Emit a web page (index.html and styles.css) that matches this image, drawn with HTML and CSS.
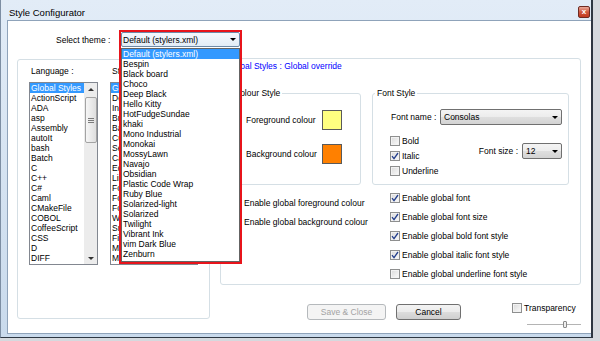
FILE: index.html
```html
<!DOCTYPE html>
<html lang="en">
<head>
    <meta charset="UTF-8">
    <meta name="viewport" content="width=device-width, initial-scale=1.0">
    <title>Style Configurator</title>
    <link rel="stylesheet" href="styles.css">
</head>
<body>
<div class="window">
    <div class="titlebar">
        <span class="title">Style Configurator</span>
        <span class="close-btn">x</span>
    </div>
    <div class="client">
        <!-- theme selector, shown dropped down -->
        <div class="theme-row">
            <span class="theme-label">Select theme :</span>
            <div class="theme-select">
                <div class="combo combo-open">
                    <span>Default (stylers.xml)</span>
                    <span class="arrow"></span>
                </div>
                <ul class="dropdown">
                    <li class="selected">Default (stylers.xml)</li>
                    <li>Bespin</li>
                    <li>Black board</li>
                    <li>Choco</li>
                    <li>Deep Black</li>
                    <li>Hello Kitty</li>
                    <li>HotFudgeSundae</li>
                    <li>khaki</li>
                    <li>Mono Industrial</li>
                    <li>Monokai</li>
                    <li>MossyLawn</li>
                    <li>Navajo</li>
                    <li>Obsidian</li>
                    <li>Plastic Code Wrap</li>
                    <li>Ruby Blue</li>
                    <li>Solarized-light</li>
                    <li>Solarized</li>
                    <li>Twilight</li>
                    <li>Vibrant Ink</li>
                    <li>vim Dark Blue</li>
                    <li>Zenburn</li>
                </ul>
                <div class="highlight"></div>
            </div>
        </div>

        <div class="main-row">
            <!-- language / style lists -->
            <div class="group lists-box">
                <div class="list-col">
                    <div class="list-label">Language :</div>
                    <div class="listbox lang-list">
                        <ul class="items">
                            <li class="selected">Global Styles</li>
                            <li>ActionScript</li>
                            <li>ADA</li>
                            <li>asp</li>
                            <li>Assembly</li>
                            <li>autoIt</li>
                            <li>bash</li>
                            <li>Batch</li>
                            <li>C</li>
                            <li>C++</li>
                            <li>C#</li>
                            <li>Caml</li>
                            <li>CMakeFile</li>
                            <li>COBOL</li>
                            <li>CoffeeScript</li>
                            <li>CSS</li>
                            <li>D</li>
                            <li>DIFF</li>
                        </ul>
                        <div class="scrollbar">
                            <span class="sb-btn"><span class="up"></span></span>
                            <span class="thumb"><span class="grip"></span></span>
                            <span class="sb-btn sb-end"><span class="down"></span></span>
                        </div>
                    </div>
                </div>
                <div class="list-col">
                    <div class="list-label">Style :</div>
                    <div class="listbox style-list">
                        <ul class="items">
                            <li class="selected">Global override</li>
                            <li>Default Style</li>
                            <li>Indent guideline style</li>
                            <li>Brace highlight style</li>
                            <li>Bad brace colour</li>
                            <li>Current line background colour</li>
                            <li>Selected text colour</li>
                            <li>Caret colour</li>
                            <li>Edge colour</li>
                            <li>Line number margin</li>
                            <li>Fold</li>
                            <li>Fold active</li>
                            <li>Fold margin</li>
                            <li>White space symbol</li>
                            <li>Smart HighLighting</li>
                            <li>Find Mark Style</li>
                            <li>Mark Style 1</li>
                            <li>Mark Style 2</li>
                        </ul>
                        <div class="scrollbar">
                            <span class="sb-btn"><span class="up"></span></span>
                            <span class="thumb"><span class="grip"></span></span>
                            <span class="sb-btn sb-end"><span class="down"></span></span>
                        </div>
                    </div>
                </div>
            </div>

            <div class="right-col">
                <div class="group style-box">
                    <div class="style-name">Global Styles : Global override</div>
                    <div class="group-row">
                        <div class="group colour-box">
                            <div class="group-title">Colour Style</div>
                            <div class="colour-row first">
                                <span>Foreground colour</span>
                                <span class="swatch fg"></span>
                            </div>
                            <div class="colour-row">
                                <span>Background colour</span>
                                <span class="swatch bg"></span>
                            </div>
                        </div>
                        <div class="group font-box">
                            <div class="group-title">Font Style</div>
                            <div class="font-name-row">
                                <span>Font name :</span>
                                <div class="combo font-combo">
                                    <span>Consolas</span>
                                    <span class="arrow"></span>
                                </div>
                            </div>
                            <div class="font-opts">
                                <div class="check-col">
                                    <div class="check"><span class="box"></span>Bold</div>
                                    <div class="check"><span class="box"><svg width="8" height="8" viewBox="0 0 8 8"><path d="M1 4.2 L3 6.6 L7 1" fill="none" stroke="#243f8c" stroke-width="1.3"/></svg></span>Italic</div>
                                    <div class="check"><span class="box"></span>Underline</div>
                                </div>
                                <div class="font-size">
                                    <span>Font size :</span>
                                    <div class="combo size-combo">
                                        <span>12</span>
                                        <span class="arrow"></span>
                                    </div>
                                </div>
                            </div>
                        </div>
                    </div>
                    <div class="enable-row">
                        <div class="check-col colour-enable">
                            <div class="check"><span class="box"></span>Enable global foreground colour</div>
                            <div class="check"><span class="box"></span>Enable global background colour</div>
                        </div>
                        <div class="check-col font-enable">
                            <div class="check"><span class="box"><svg width="8" height="8" viewBox="0 0 8 8"><path d="M1 4.2 L3 6.6 L7 1" fill="none" stroke="#243f8c" stroke-width="1.3"/></svg></span>Enable global font</div>
                            <div class="check"><span class="box"><svg width="8" height="8" viewBox="0 0 8 8"><path d="M1 4.2 L3 6.6 L7 1" fill="none" stroke="#243f8c" stroke-width="1.3"/></svg></span>Enable global font size</div>
                            <div class="check"><span class="box"><svg width="8" height="8" viewBox="0 0 8 8"><path d="M1 4.2 L3 6.6 L7 1" fill="none" stroke="#243f8c" stroke-width="1.3"/></svg></span>Enable global bold font style</div>
                            <div class="check"><span class="box"><svg width="8" height="8" viewBox="0 0 8 8"><path d="M1 4.2 L3 6.6 L7 1" fill="none" stroke="#243f8c" stroke-width="1.3"/></svg></span>Enable global italic font style</div>
                            <div class="check"><span class="box"></span>Enable global underline font style</div>
                        </div>
                    </div>
                </div>

                <div class="footer">
                    <button class="btn btn-save" disabled>Save &amp; Close</button>
                    <button class="btn btn-cancel">Cancel</button>
                    <div class="transparency">
                        <div class="check"><span class="box"></span>Transparency</div>
                        <div class="slider"><span class="slider-thumb"></span></div>
                    </div>
                </div>
            </div>
        </div>
    </div>
</div>
</body>
</html>
```

FILE: styles.css
```css
*{
    box-sizing: border-box;
}
body{
    margin: 0;
    background: #d5d9de;
    font-family: "Liberation Sans", Arial, sans-serif;
    font-size: 8.5px;
    color: #000;
}
ul{
    list-style: none;
    margin: 0;
    padding: 0;
}

/* window frame */
.window{
    width: 593px;
    height: 338px;
    display: flex;
    flex-direction: column;
    border-left: 1px solid #7d8ea3;
    border-right: 2px solid #2e3742;
    border-bottom: 1px solid #2e3742;
    padding: 0 0 3px 6px;
    background: linear-gradient(#e2ecf7, #c9daec);
}
.titlebar{
    height: 20px;
    display: flex;
    justify-content: space-between;
    align-items: flex-start;
}
.title{
    font-size: 9.5px;
    line-height: 10px;
    margin: 8px 0 0 2px;
}
.close-btn{
    width: 12px;
    height: 12px;
    margin: 6px 1px 0 0;
    border: 1px solid #6e2b22;
    border-radius: 2px;
    background: linear-gradient(#eaa99a, #d0583f 50%, #c2391f);
    color: #fff;
    font-size: 8px;
    font-weight: bold;
    line-height: 9px;
    text-align: center;
}
.client{
    flex: 1;
    background: #fff;
    border: 1px solid #8fa3ba;
    border-right: none;
}

/* theme row */
.theme-row{
    display: flex;
    align-items: center;
    margin-top: 11px;
    padding-left: 48px;
}
.theme-label{
    width: 65px;
    line-height: 10px;
}
.theme-select{
    position: relative;
    z-index: 2;
}
.combo{
    display: flex;
    align-items: center;
    height: 16px;
    padding-left: 3px;
    border: 1px solid #707070;
    border-radius: 2px;
    background: linear-gradient(#f4f4f4, #ececec 50%, #dfdfdf 50%, #d3d3d3);
    white-space: nowrap;
}
.combo-open{
    width: 119px;
    height: 15px;
    padding-left: 1px;
    border-color: #6d8aa8;
    background: linear-gradient(#f5f9fd, #e2ecf6);
}
.arrow{
    margin-left: auto;
    margin-right: 3px;
    border-left: 3px solid transparent;
    border-right: 3px solid transparent;
    border-top: 3px solid #000;
}
.dropdown{
    position: absolute;
    top: calc(100% + 1px);
    left: 0;
    width: 119px;
    padding-bottom: 2px;
    border: 1px solid #646464;
    background: #fff;
}
.dropdown li{
    line-height: 10px;
    padding-left: 1px;
    white-space: nowrap;
}
.selected{
    background: #3399ff;
    color: #fff;
}
.highlight{
    position: absolute;
    left: -2px;
    right: -2px;
    top: -2px;
    height: 234px;
    border: 2px solid #e8141b;
}

/* main area */
.main-row{
    display: flex;
    align-items: flex-start;
    gap: 10px;
    margin-top: 11px;
    padding-left: 9px;
}
.group{
    border: 1px solid #d5dfe5;
    border-radius: 3px;
}
.lists-box{
    width: 193px;
    height: 260px;
    margin-top: 1px;
    display: flex;
    gap: 12px;
    padding: 6px 0 0 11px;
}
.list-label{
    line-height: 10px;
    padding-left: 2px;
    margin-bottom: 6px;
}
.listbox{
    height: 183px;
    display: flex;
    border: 1px solid #828790;
    background: #fff;
}
.lang-list{
    width: 69px;
}
.style-list{
    width: 88px;
}
.items{
    flex: 1;
    overflow: hidden;
}
.items li{
    line-height: 10px;
    padding-left: 1px;
    white-space: nowrap;
}
.scrollbar{
    width: 13px;
    display: flex;
    flex-direction: column;
    align-items: center;
    background: #ececec;
}
.sb-btn{
    height: 12px;
    display: flex;
    align-items: center;
    justify-content: center;
}
.sb-end{
    margin-top: auto;
}
.up{
    border-left: 3px solid transparent;
    border-right: 3px solid transparent;
    border-bottom: 3px solid #333;
}
.down{
    border-left: 3px solid transparent;
    border-right: 3px solid transparent;
    border-top: 3px solid #333;
}
.thumb{
    width: 12px;
    height: 46px;
    margin-top: 2px;
    display: flex;
    align-items: center;
    justify-content: center;
    border: 1px solid #a3a3a3;
    border-radius: 2px;
    background: linear-gradient(90deg, #f6f6f6, #dedede);
}
.grip{
    width: 6px;
    height: 5px;
    background: repeating-linear-gradient(#7a7a7a 0 1px, transparent 1px 2px);
}

/* right side */
.right-col{
    width: 361px;
    display: flex;
    flex-direction: column;
}
.style-box{
    height: 227px;
}
.style-name{
    color: #0000ff;
    line-height: 10px;
    margin: 2px 0 0 6px;
}
.group-row{
    display: flex;
    gap: 11px;
    margin-top: 22px;
    padding-left: 8px;
}
.colour-box{
    width: 132px;
    height: 92px;
}
.font-box{
    width: 197px;
    height: 92px;
}
.group-title{
    display: table;
    margin: -6px 0 0 2px;
    padding: 0 2px;
    line-height: 10px;
    background: #fff;
}
.colour-row{
    display: flex;
    align-items: center;
    justify-content: space-between;
    margin-top: 14px;
    padding: 0 18px 0 16px;
}
.colour-row.first{
    margin-top: 12px;
}
.swatch{
    width: 20px;
    height: 20px;
    border: 1px solid #5a5a5a;
}
.fg{
    background: #ffff80;
}
.bg{
    background: #ff8000;
}
.font-name-row{
    display: flex;
    align-items: center;
    margin-top: 11px;
    padding: 0 6px 0 18px;
}
.font-combo{
    width: 122px;
    margin-left: auto;
}
.font-opts{
    display: flex;
    align-items: flex-start;
    margin-top: 11px;
    padding: 0 6px 0 17px;
}
.check-col{
    display: flex;
    flex-direction: column;
    gap: 5px;
}
.check{
    display: flex;
    align-items: center;
    gap: 2px;
    height: 10px;
    line-height: 10px;
    white-space: nowrap;
}
.box{
    width: 10px;
    height: 10px;
    flex: none;
    display: flex;
    align-items: center;
    justify-content: center;
    border: 1px solid #8e8f8f;
    background: linear-gradient(135deg, #d9d9d9, #fbfbfb);
    box-shadow: inset 0 0 0 1px #f2f2f2;
}
.font-size{
    display: flex;
    align-items: center;
    gap: 4px;
    margin: 7px 0 0 auto;
}
.size-combo{
    width: 40px;
}
.enable-row{
    display: flex;
    margin-top: 8px;
    padding-left: 8px;
}
.colour-enable{
    width: 143px;
    gap: 9px;
    padding: 5px 0 0 3px;
}
.font-enable{
    gap: 9px;
    padding-left: 18px;
}

/* buttons */
.footer{
    display: flex;
    align-items: flex-start;
    margin-top: 19px;
    padding-left: 87px;
}
.btn{
    height: 16px;
    padding: 0;
    font: inherit;
    line-height: 14px;
    border: 1px solid #707070;
    border-radius: 3px;
    background: linear-gradient(#f3f3f3, #ebebeb 50%, #dddddd 50%, #cfcfcf);
}
.btn-save{
    width: 79px;
    color: #a3a3a3;
    border-color: #b5b9bc;
    background: #f4f4f4;
}
.btn-cancel{
    width: 65px;
    margin-left: 10px;
    color: #000;
}
.transparency{
    width: 69px;
    margin: -1px 0 0 auto;
}
.slider{
    height: 7px;
    margin: 8px 0 0 15px;
    display: flex;
    align-items: center;
    background: linear-gradient(transparent 3px, #b4b4b4 3px, #b4b4b4 4px, #fff 4px, #fff 5px, transparent 5px);
}
.slider-thumb{
    width: 4px;
    height: 7px;
    margin-left: 36px;
    border: 1px solid #8a8a8a;
    border-radius: 1px;
    background: #eeeeee;
}
```
